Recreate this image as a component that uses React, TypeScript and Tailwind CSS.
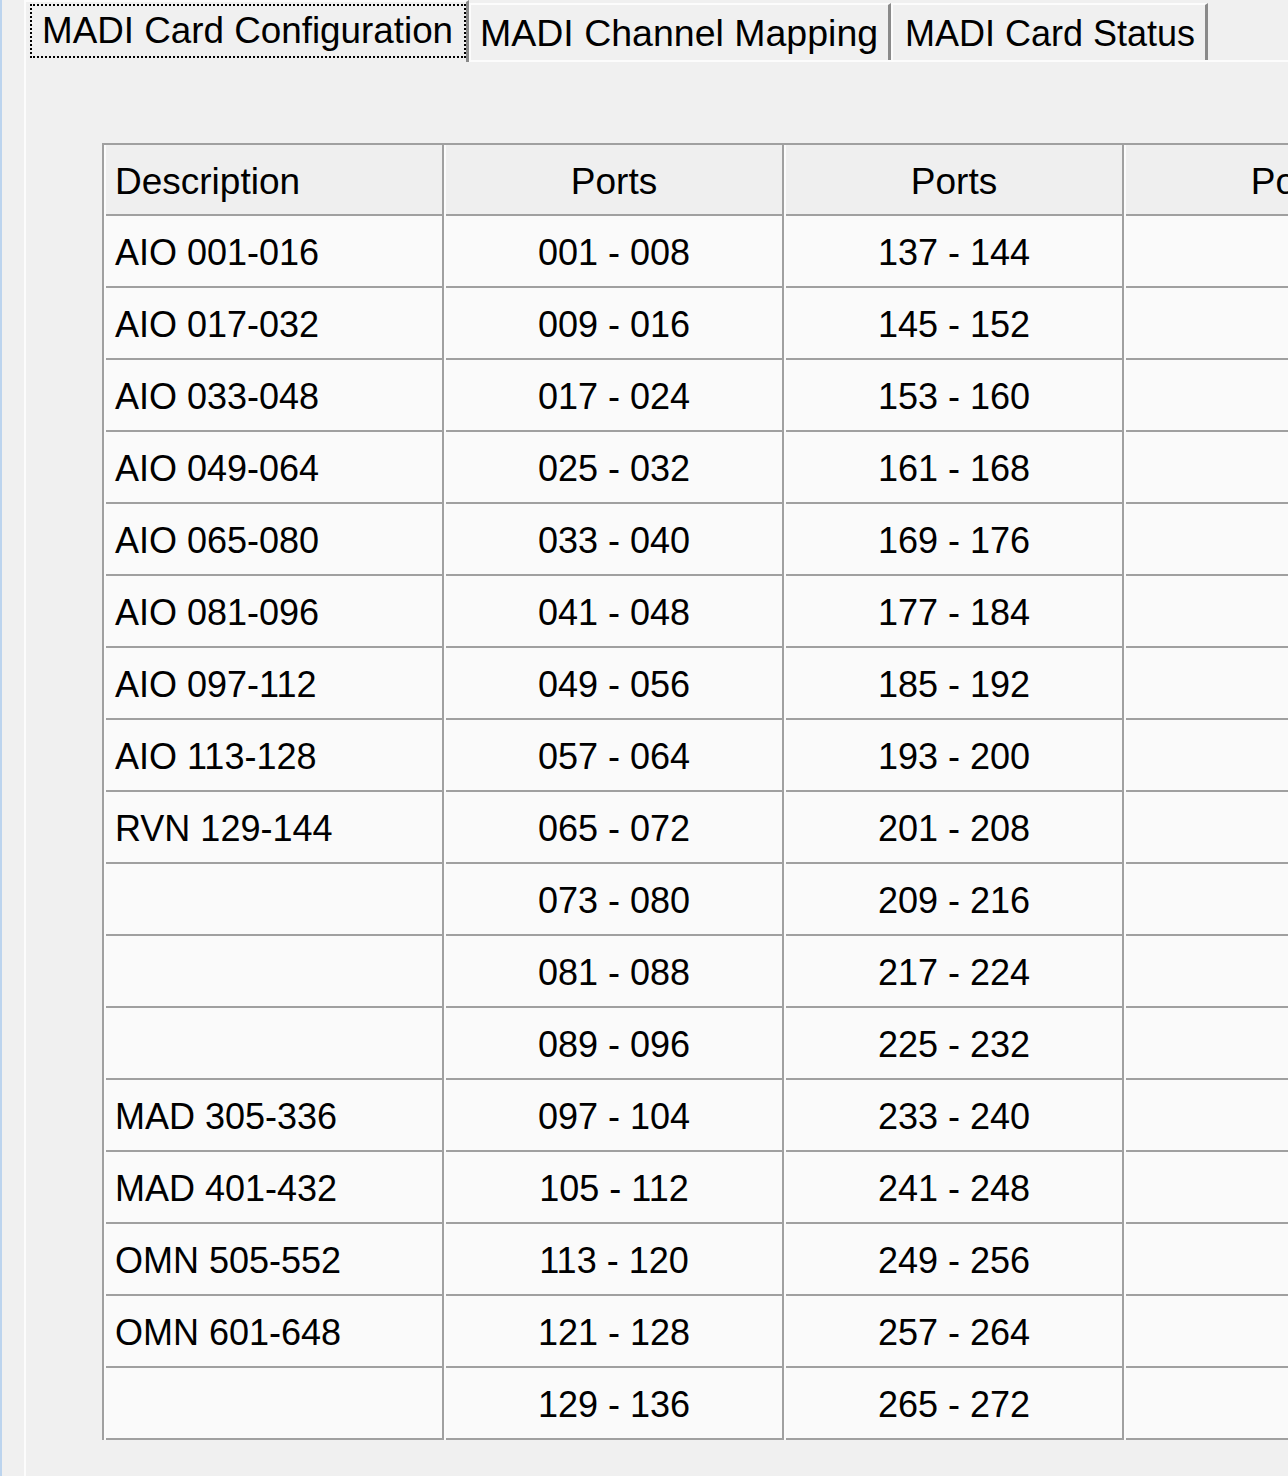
// App.tsx — MADI card configuration tab page
const pad = (n: number) => String(n).padStart(3, '0')
const range = (start: number) => `${pad(start)} - ${pad(start + 7)}`

const DESCRIPTIONS = [
  'AIO 001-016',
  'AIO 017-032',
  'AIO 033-048',
  'AIO 049-064',
  'AIO 065-080',
  'AIO 081-096',
  'AIO 097-112',
  'AIO 113-128',
  'RVN 129-144',
  '',
  '',
  '',
  'MAD 305-336',
  'MAD 401-432',
  'OMN 505-552',
  'OMN 601-648',
  '',
]

const COLUMNS: { title: string; left?: boolean; cells: string[] }[] = [
  { title: 'Description', left: true, cells: DESCRIPTIONS },
  { title: 'Ports', cells: DESCRIPTIONS.map((_, i) => range(1 + i * 8)) },
  { title: 'Ports', cells: DESCRIPTIONS.map((_, i) => range(137 + i * 8)) },
  { title: 'Ports', cells: DESCRIPTIONS.map(() => '') },
]

const TABS = [
  { label: 'MADI Channel Mapping', w: 'w-[422px]', pl: 'pl-[9px]', size: 'text-[37.5px]' },
  { label: 'MADI Card Status', w: 'w-[317px]', pl: 'pl-[12px]', size: 'text-[36px]' },
]

export default function App() {
  return (
    <div className="flex h-[1476px] w-[1288px] overflow-hidden bg-[#f0f0f0] font-['Liberation_Sans',Arial,sans-serif] text-black">
      {/* window edge */}
      <div className="w-[2px] shrink-0 bg-[#bcd4ee]" />

      <div className="ml-[22px] flex min-w-0 flex-1 flex-col">
        {/* tab strip */}
        <div className="relative z-10 flex h-[60px] items-start">
          <div className="h-[62px] w-[445px] shrink-0 border-l-2 border-t-2 border-r-[3px] border-l-[#fcfcfc] border-t-[#fcfcfc] border-r-[#8a8a8a] bg-[#f0f0f0] pl-[4px] pt-[2px]">
            <div className="flex h-[54px] w-[436px] items-center border-2 border-dotted border-black pl-[10px] text-[36.8px] leading-none">
              MADI Card Configuration
            </div>
          </div>
          {TABS.map(t => (
            <div key={t.label}
              className={`mt-[3px] flex h-[57px] shrink-0 items-center border-l-2 border-t-2 border-r-[3px] border-l-[#fcfcfc] border-t-[#fcfcfc] border-r-[#8a8a8a] pt-[2px] leading-none ${t.w} ${t.pl} ${t.size}`}>
              {t.label}
            </div>
          ))}
        </div>

        {/* tab panel */}
        <div className="flex-1 border-l-2 border-t-2 border-[#fcfcfc] pl-[76px] pt-[81px]">
          <div className="flex w-max border-l-2 border-t-2 border-[#a0a0a0] text-[36px] leading-none">
            {COLUMNS.map((col, ci) => (
              <div key={ci}
                className="flex w-[340px] shrink-0 flex-col border-l-2 border-r-2 border-l-[#fcfcfc] border-r-[#a0a0a0]">
                <div className={`flex h-[71px] items-center border-b-2 border-[#a0a0a0] bg-[#efefef] pt-[3px] text-[37px] ${col.left ? 'pl-[9px]' : 'justify-center'}`}>
                  {col.title}
                </div>
                {col.cells.map((c, ri) => (
                  <div key={ri}
                    className={`flex h-[72px] items-center border-b-2 border-[#a0a0a0] bg-[#fafafa] pt-[4px] ${col.left ? 'pl-[9px]' : 'justify-center'}`}>
                    {c}
                  </div>
                ))}
              </div>
            ))}
          </div>
        </div>
      </div>
    </div>
  )
}
